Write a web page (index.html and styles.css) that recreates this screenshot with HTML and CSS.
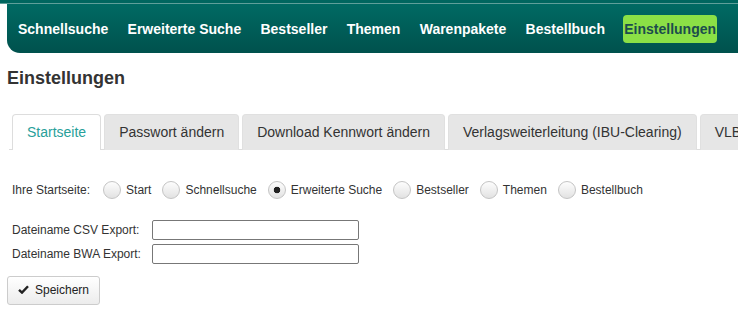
FILE: index.html
```html
<!DOCTYPE html>
<html lang="de">
<head>
    <meta charset="UTF-8">
    <meta name="viewport" content="width=device-width, initial-scale=1.0">
    <title>Einstellungen</title>
    <link rel="stylesheet" href="styles.css">
</head>
<body>
    <div class="topline"></div>
    <nav class="mainnav">
        <a href="#">Schnellsuche</a>
        <a href="#">Erweiterte Suche</a>
        <a href="#">Bestseller</a>
        <a href="#">Themen</a>
        <a href="#">Warenpakete</a>
        <a href="#">Bestellbuch</a>
        <a href="#" class="active">Einstellungen</a>
    </nav>

    <h1>Einstellungen</h1>

    <ul class="tabs">
        <li class="active">Startseite</li>
        <li>Passwort ändern</li>
        <li>Download Kennwort ändern</li>
        <li>Verlagsweiterleitung (IBU-Clearing)</li>
        <li>VLB-Zugang</li>
    </ul>

    <form class="settings">
        <div class="startpage">
            <span class="label">Ihre Startseite:</span>
            <label><input type="radio" name="start"> Start</label>
            <label><input type="radio" name="start"> Schnellsuche</label>
            <label><input type="radio" name="start" checked> Erweiterte Suche</label>
            <label><input type="radio" name="start"> Bestseller</label>
            <label><input type="radio" name="start"> Themen</label>
            <label><input type="radio" name="start"> Bestellbuch</label>
        </div>

        <div class="field">
            <label for="csv">Dateiname CSV Export:</label>
            <input type="text" id="csv">
        </div>
        <div class="field">
            <label for="bwa">Dateiname BWA Export:</label>
            <input type="text" id="bwa">
        </div>

        <button type="button" class="save">
            <svg width="11" height="9" viewBox="0 0 11 9"><path d="M1 4.8 L4 7.6 L10 1.2" fill="none" stroke="#222" stroke-width="2.4"/></svg>
            Speichern
        </button>
    </form>
</body>
</html>
```

FILE: styles.css
```css
body {
    margin: 0;
    font-family: "Liberation Sans", Arial, sans-serif;
    color: #333;
    background: #fff;
    overflow: hidden;
}

.topline {
    height: 3px;
    background: #00665f;
    border-bottom: 1px solid #5f9f9a;
}

/* main navigation bar */
.mainnav {
    margin-left: 7px;
    height: 49px;
    padding-left: 10px;
    display: flex;
    align-items: center;
    gap: 17.3px;
    background: linear-gradient(#006a63, #00514d);
    border-bottom-left-radius: 13px;
}

.mainnav a {
    color: #fff;
    font-size: 14px;
    font-weight: bold;
    text-decoration: none;
    padding: 6px 1px;
    line-height: 16px;
    border-radius: 4px;
}

.mainnav a.active {
    background: #8be046;
    color: #1c4d4d;
}

h1 {
    font-size: 18px;
    margin: 14px 0 0 7px;
    line-height: 22px;
    color: #333;
}

/* tabs */
.tabs {
    list-style: none;
    margin: 25px 0 0 9px;
    padding: 0 0 0 3px;
    display: flex;
    gap: 3px;
    border-bottom: 1px solid #ddd;
    white-space: nowrap;
}

.tabs li {
    font-size: 14px;
    line-height: 16px;
    padding: 9px 14px;
    background: #e6e6e6;
    border: 1px solid #e0e0e0;
    border-bottom: none;
    border-radius: 4px 4px 0 0;
    margin-bottom: -1px;
    color: #333;
}

.tabs li.active {
    background: #fff;
    border-color: #ddd;
    color: #28a09a;
    padding-bottom: 10px;
}

/* form */
.settings {
    padding: 0 0 0 12px;
    font-size: 12px;
}

.startpage {
    display: flex;
    align-items: center;
    margin-top: 30px;
    height: 20px;
}

.startpage .label {
    margin-right: 12px;
}

.startpage label {
    display: flex;
    align-items: center;
    margin-right: 10px;
}

.startpage input {
    appearance: none;
    -webkit-appearance: none;
    width: 18px;
    height: 18px;
    margin: 0 5px 0 1px;
    border: 1px solid #c4c4c4;
    border-radius: 50%;
    background: linear-gradient(#fdfdfd, #e2e2e2);
}

.startpage input:checked {
    background: radial-gradient(circle, #222 3px, transparent 3.6px), linear-gradient(#fdfdfd, #e2e2e2);
}

.field {
    display: flex;
    align-items: center;
    height: 20px;
    margin-bottom: 4px;
}

.startpage + .field {
    margin-top: 20px;
}

.field label {
    width: 140px;
}

.field input {
    width: 207px;
    height: 20px;
    box-sizing: border-box;
    border: 1px solid #777;
    border-radius: 2px;
    margin: 0;
}

.save {
    margin: 12px 0 0 -5px;
    width: 93px;
    height: 29px;
    font-family: inherit;
    font-size: 12px;
    color: #222;
    border: 1px solid #ccc;
    border-radius: 3px;
    background: linear-gradient(#fff, #ececec);
    display: flex;
    align-items: center;
    gap: 6px;
    padding: 0 0 2px 10px;
}
```
